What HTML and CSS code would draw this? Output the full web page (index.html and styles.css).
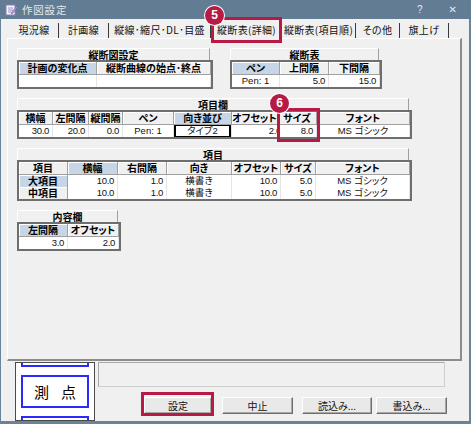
FILE: index.html
```html
<!DOCTYPE html>
<html lang="ja">
<head>
<meta charset="utf-8">
<title>作図設定</title>
<link rel="stylesheet" href="styles.css">
</head>
<body>
<div class="window">
  <div class="titlebar">
    <svg class="app-icon" width="13" height="13" viewBox="0 0 13 13">
      <rect x="1" y="2" width="9" height="10" fill="#f4f2fb" stroke="#8a7fb8" stroke-width="1"/>
      <path d="M3 5h5M3 7h5M3 9h3" stroke="#9a92c4" stroke-width="1"/>
      <path d="M6 10 L11.5 3.5 L12.5 4.5 L7 11 Z" fill="#b59ad6" stroke="#6b5a9c" stroke-width="0.6"/>
    </svg>
    <span class="title">作図設定</span>
    <span class="tb-help">?</span>
    <span class="tb-close">✕</span>
  </div>
  <div class="client">
    <div class="tabs">
      <div class="tab t1">現況線</div>
      <div class="tab t2">計画線</div>
      <div class="tab t3">縦線･縮尺･DL･目盛</div>
      <div class="tab t4 active">縦断表(詳細)</div>
      <div class="tab t5">縦断表(項目順)</div>
      <div class="tab t6">その他</div>
      <div class="tab t7">旗上げ</div>
    </div>
    <div class="panel">
      <div class="row">
        <div class="group">
          <div class="ghead">縦断図設定</div>
          <div class="grid cols-zd">
            <div class="h sel">計画の変化点</div>
            <div class="h">縦断曲線の始点･終点</div>
            <div class="d"></div>
            <div class="d"></div>
          </div>
        </div>
        <div class="group g-zt">
          <div class="ghead">縦断表</div>
          <div class="grid cols-zt">
            <div class="h sel">ペン</div>
            <div class="h">上間隔</div>
            <div class="h">下間隔</div>
            <div class="d ctr">Pen: 1</div>
            <div class="d num">5.0</div>
            <div class="d num">15.0</div>
          </div>
        </div>
      </div>

      <div class="group">
        <div class="ghead">項目欄</div>
        <div class="grid cols-kr">
          <div class="h">横幅</div>
          <div class="h">左間隔</div>
          <div class="h">縦間隔</div>
          <div class="h">ペン</div>
          <div class="h sel">向き並び</div>
          <div class="h">オフセット</div>
          <div class="h">サイズ</div>
          <div class="h">フォント</div>
          <div class="d num">30.0</div>
          <div class="d num">20.0</div>
          <div class="d num">0.0</div>
          <div class="d ctr">Pen: 1</div>
          <div class="d ctr focus">タイプ2</div>
          <div class="d num clip"><span>2.0</span></div>
          <div class="d num">8.0</div>
          <div class="d ctr">MS ゴシック</div>
        </div>
      </div>

      <div class="group">
        <div class="ghead">項目</div>
        <div class="grid cols-km">
          <div class="h">項目</div>
          <div class="h sel">横幅</div>
          <div class="h">右間隔</div>
          <div class="h">向き</div>
          <div class="h">オフセット</div>
          <div class="h">サイズ</div>
          <div class="h">フォント</div>

          <div class="r sel">大項目</div>
          <div class="d num">10.0</div>
          <div class="d num">1.0</div>
          <div class="d ctr">横書き</div>
          <div class="d num">10.0</div>
          <div class="d num">5.0</div>
          <div class="d ctr">MS ゴシック</div>

          <div class="r">中項目</div>
          <div class="d num">10.0</div>
          <div class="d num">1.0</div>
          <div class="d ctr">横書き</div>
          <div class="d num">10.0</div>
          <div class="d num">5.0</div>
          <div class="d ctr">MS ゴシック</div>
        </div>
      </div>

      <div class="group">
        <div class="ghead">内容欄</div>
        <div class="grid cols-ny">
          <div class="h sel">左間隔</div>
          <div class="h">オフセット</div>
          <div class="d num">3.0</div>
          <div class="d num">2.0</div>
        </div>
      </div>
    </div>

    <div class="bottom">
      <div class="preview">
        <div class="pv-box pv-top"></div>
        <div class="pv-box pv-main"><span>測</span><span>点</span></div>
        <div class="pv-box"></div>
      </div>
      <div class="actions">
        <div class="textbox"></div>
        <div class="buttons">
          <button class="btn b-set">設定</button>
          <button class="btn b-cancel">中止</button>
          <button class="btn b-load">読込み...</button>
          <button class="btn b-save">書込み...</button>
        </div>
      </div>
    </div>
  </div>

  <div class="mark m5"></div>
  <div class="mark m6"></div>
  <div class="mark mset"></div>
  <div class="badge b5">5</div>
  <div class="badge b6">6</div>
</div>
</body>
</html>
```

FILE: styles.css
```css
* { box-sizing: border-box; }
html, body { margin: 0; padding: 0; }
body {
  width: 471px;
  height: 424px;
  overflow: hidden;
  background: #f0f0f0;
  font-family: "Noto Sans CJK JP", "Liberation Sans", sans-serif;
  font-size: 10px;
  font-feature-settings: "palt";
  color: #000;
}

.window {
  position: relative;
  width: 471px;
  height: 424px;
  display: flex;
  flex-direction: column;
}

/* title bar */
.titlebar {
  flex: none;
  height: 19px;
  background: #627c93;
  color: #e3e8ed;
  display: flex;
  align-items: center;
  padding-left: 5px;
}
.app-icon { flex: none; }
.title { margin-left: 4px; font-size: 10.5px; letter-spacing: 0.8px; }
.tb-help { margin-left: auto; font-family: "Liberation Sans", sans-serif; font-size: 10px; }
.tb-close { margin-left: 26px; margin-right: 14px; font-family: "DejaVu Sans", sans-serif; font-size: 10px; }

/* client area */
.client {
  flex: 1;
  display: flex;
  flex-direction: column;
  background: #f0f0f0;
  border-left: 1px solid #6a8398;
  border-right: 2px solid #6a8398;
  border-bottom: 3px solid #6a8398;
  padding: 4px 6px 0 6px;
}

/* tabs */
.tabs {
  flex: none;
  display: flex;
  align-items: flex-end;
  height: 15px;
  margin-left: 3px;
}
.tab {
  height: 15px;
  line-height: 14px;
  text-align: center;
  white-space: nowrap;
  border-right: 1px solid #3a3a3a;
  color: #111;
  letter-spacing: 0.3px;
}
.t1 { width: 49px; }
.t2 { width: 50px; }
.t3 { width: 102px; }
.t4 { width: 71px; }
.t5 { width: 74px; }
.t6 { width: 44px; }
.t7 { width: 49px; }
.tab.active {
  height: 18px;
  line-height: 18px;
  margin-bottom: -1px;
  background: #f0f0f0;
  border-left: 1px solid #fff;
  border-right: 1px solid #6a6a6a;
  position: relative;
  z-index: 1;
}

/* panel */
.panel {
  flex: none;
  width: 455px;
  height: 323px;
  border-top: 1px solid #fff;
  border-left: 1px solid #fff;
  border-right: 2px solid #8c8c8c;
  border-bottom: 2px solid #8c8c8c;
  padding: 9px 0 0 9px;
}
.row { display: flex; align-items: flex-start; }
.group { width: fit-content; }
.group + .group { margin-top: 9px; }
.row + .group { margin-top: 9px; }
.row .group + .group { margin-top: 0; margin-left: 17px; }

.ghead {
  height: 12px;
  line-height: 11px;
  margin-right: 3px;
  text-align: center;
  font-weight: bold;
  background: #f0f0f0;
  border-top: 1px solid #fff;
  border-left: 1px solid #fff;
  border-right: 1px solid #a0a0a0;
}

.grid {
  display: grid;
  border: 2px solid #6e6e6e;
  background: #fff;
}
.cols-zd { grid-template-columns: 78px 114px; }
.cols-zt { grid-template-columns: 48px 49px 51px; }
.cols-kr { grid-template-columns: 34px 36px 34px 51px 58px 46px 39px 93px; }
.cols-km { grid-template-columns: 49px 50px 49px 65px 49px 35px 94px; }
.cols-ny { grid-template-columns: 49px 51px; }

.h, .r {
  height: 13px;
  line-height: 12px;
  font-weight: bold;
  text-align: center;
  white-space: nowrap;
  background: #f0f0f0;
  border-right: 1px solid #a0a0a0;
  border-bottom: 1px solid #a0a0a0;
  box-shadow: inset 1px 1px 0 #fff;
}
.r { height: 12px; border-bottom: 0; line-height: 12px; }
.h.sel, .r.sel { background: #c6d6e7; }

.d {
  height: 12px;
  line-height: 12px;
  white-space: nowrap;
  background: #fff;
  border-right: 1px solid #e4e4e4;
  font-family: "Liberation Sans Narrow", "Liberation Sans", "Noto Sans CJK JP", sans-serif;
  font-size: 9.5px;
  color: #111;
}
.d.num { text-align: right; padding-right: 3px; letter-spacing: -0.3px; }
.d.ctr { text-align: center; }
.d.focus { box-shadow: inset 0 0 0 1px #000, inset 2px 0 0 #000, inset -2px 0 0 #000; }
.d.clip { padding-right: 0; overflow: hidden; }
.d.clip span { display: inline-block; margin-right: -4px; }

/* bottom area */
.bottom {
  flex: 1;
  display: flex;
  margin-left: 8px;
  margin-top: 1px;
}
.preview {
  flex: none;
  width: 80px;
  height: 59px;
  border: 1px solid #4a4a4a;
  background: #fff;
  overflow: hidden;
  padding: 0 5px;
  display: flex;
  flex-direction: column;
  gap: 8px;
}
.pv-box {
  flex: none;
  height: 33px;
  border: 2px solid #2a2aff;
}
.pv-top { margin-top: -29px; }
.pv-main {
  display: flex;
  justify-content: center;
  align-items: center;
  gap: 12px;
  font-size: 15px;
  line-height: 15px;
  color: #000;
}
.actions {
  flex: none;
  margin-left: 3px;
  display: flex;
  flex-direction: column;
}
.textbox {
  width: 347px;
  height: 25px;
  background: #f0f0f0;
  border: 1px solid #cfcfcf;
  border-top-color: #a8a8a8;
  border-left-color: #a8a8a8;
}
.buttons {
  display: flex;
  margin-top: 10px;
  margin-left: 46px;
}
.btn {
  height: 17px;
  padding: 0;
  margin: 0;
  background: #e9e9e9;
  border: 1px solid;
  border-color: #fff #6e6e6e #6e6e6e #fff;
  box-shadow: inset -1px -1px 0 #a8a8a8;
  font-family: "Noto Sans CJK JP", sans-serif;
  font-feature-settings: "palt";
  font-size: 10px;
  line-height: 14px;
  color: #111;
}
.b-set { width: 68px; }
.b-cancel { width: 71px; margin-left: 10px; }
.b-load { width: 70px; margin-left: 9px; }
.b-save { width: 71px; margin-left: 4px; }

/* annotation overlays */
.mark {
  position: absolute;
  border: 3px solid #b71b45;
  z-index: 2;
}
.m5 { left: 211px; top: 17px; width: 71px; height: 26px; }
.m6 { left: 277px; top: 108px; width: 43px; height: 34px; }
.mset { left: 141px; top: 392px; width: 73px; height: 24px; }
.badge {
  position: absolute;
  z-index: 3;
  width: 19px;
  height: 19px;
  border-radius: 50%;
  background: #b71b45;
  box-shadow: 0 0 0 1px #fff;
  color: #fff;
  font-family: "Liberation Sans", sans-serif;
  font-weight: bold;
  font-size: 12px;
  line-height: 19px;
  text-align: center;
}
.b5 { left: 205px; top: 6px; }
.b6 { left: 270px; top: 94px; }
```
